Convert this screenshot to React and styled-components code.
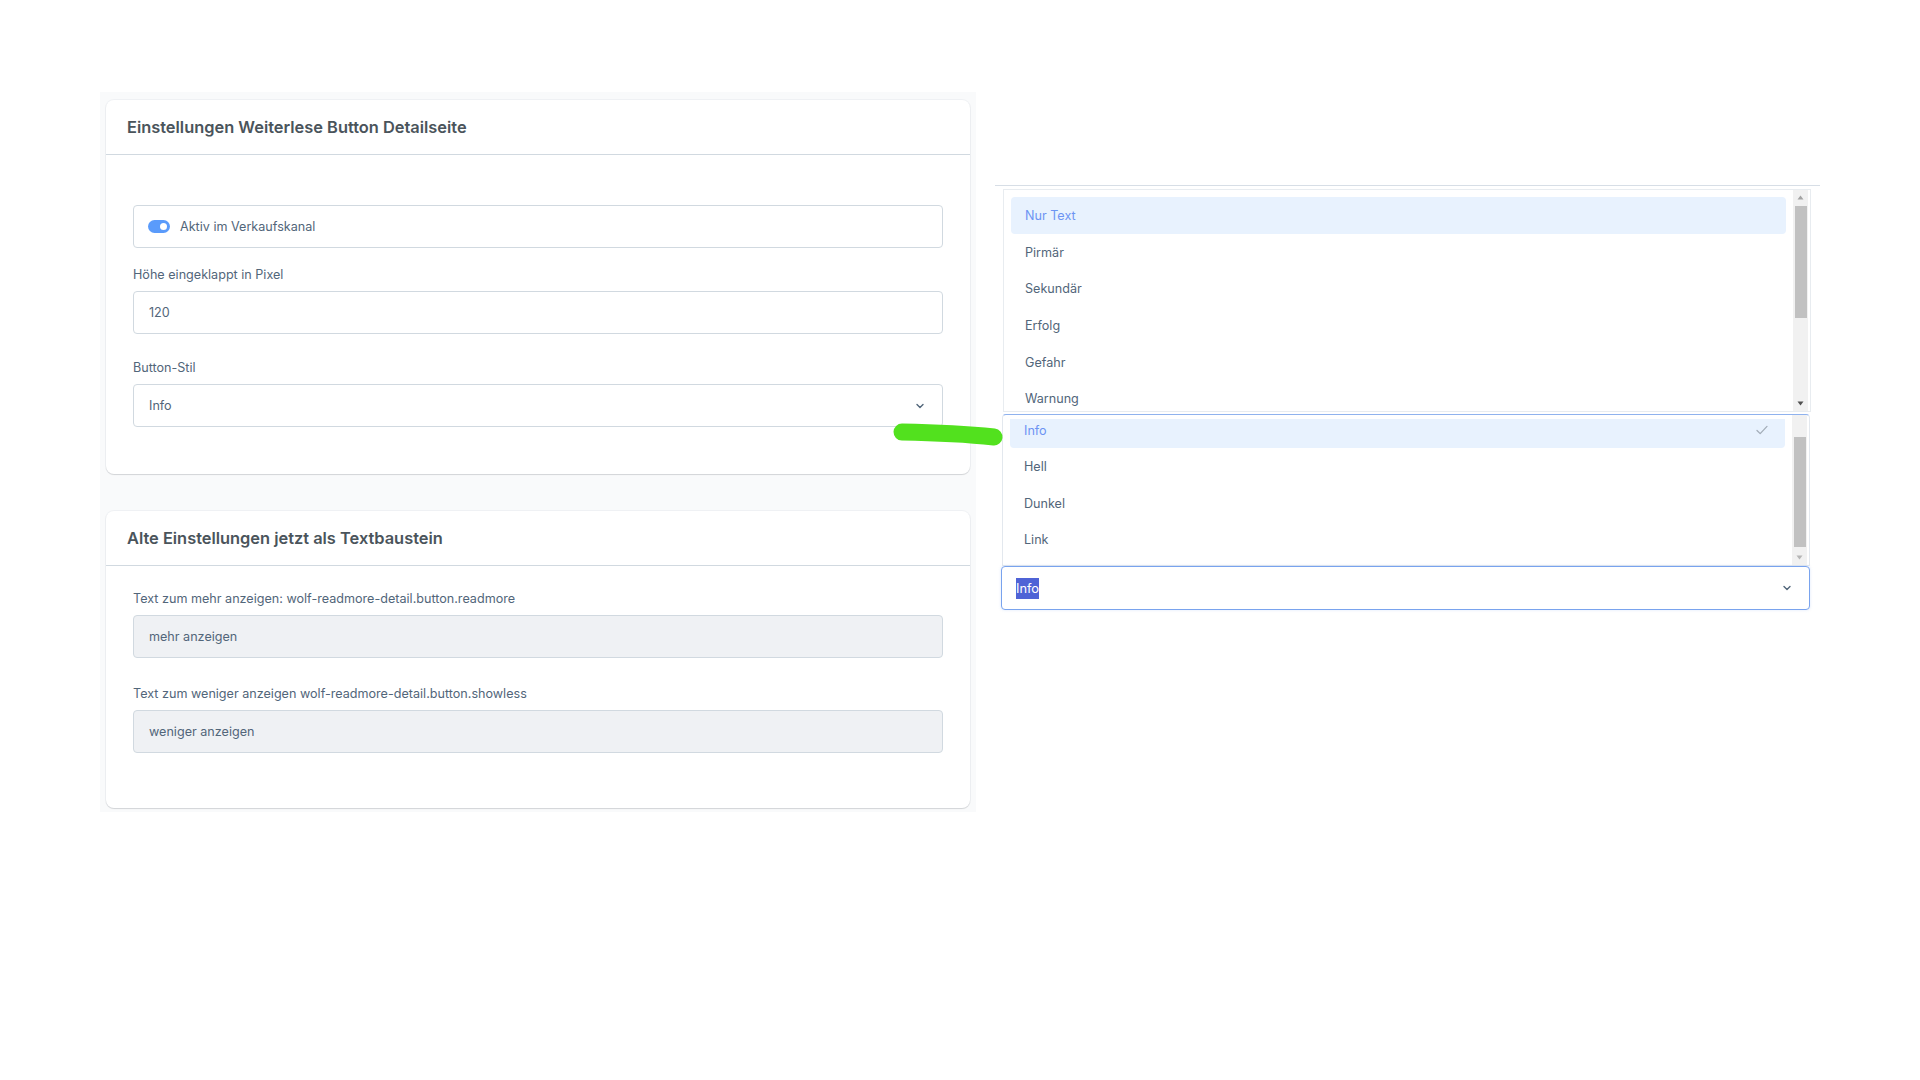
import styled, { createGlobalStyle } from "styled-components";

const GlobalStyle = createGlobalStyle`
  html, body {
    margin: 0;
    padding: 0;
    background: #ffffff;
  }
  body {
    font-family: Inter, "Noto Sans", "Liberation Sans", sans-serif;
    color: #52667a;
    -webkit-font-smoothing: antialiased;
  }
`;

const topOptions = ["Nur Text", "Pirmär", "Sekundär", "Erfolg", "Gefahr", "Warnung"];
const bottomOptions = ["Info", "Hell", "Dunkel", "Link"];

const ChevronDown = ({ size = 10 }) => (
  <svg width={size} height={size} viewBox="0 0 10 10" fill="none">
    <polyline points="2,3.5 5,6.5 8,3.5" stroke="#52667a" strokeWidth="1.4" strokeLinecap="round" strokeLinejoin="round" />
  </svg>
);

const Check = () => (
  <svg width="12" height="10" viewBox="0 0 12 10" fill="none">
    <polyline points="1,5.5 4.2,8.6 11,1.4" stroke="#a3adb8" strokeWidth="1.3" strokeLinecap="round" strokeLinejoin="round" />
  </svg>
);

const ArrowUp = () => (
  <svg width="7" height="5" viewBox="0 0 7 5">
    <polygon points="3.5,0.5 6.5,4.5 0.5,4.5" fill="#a3a3a3" />
  </svg>
);

const ArrowDown = ({ color = "#505050" }) => (
  <svg width="7" height="5" viewBox="0 0 7 5">
    <polygon points="0.5,0.5 6.5,0.5 3.5,4.5" fill={color} />
  </svg>
);

const App = () => {
  return (
    <>
      <GlobalStyle />
      <Page>
        <Content>
          <Card>
            <CardHeader>Einstellungen Weiterlese Button Detailseite</CardHeader>
            <CardBody $top={50} $bottom={47}>
              <SwitchBox>
                <Switch />
                <span>Aktiv im Verkaufskanal</span>
              </SwitchBox>
              <Field $gap={26}>
                <Label>Höhe eingeklappt in Pixel</Label>
                <Input>120</Input>
              </Field>
              <Field>
                <Label>Button-Stil</Label>
                <Input>
                  <span>Info</span>
                  <ChevronDown />
                </Input>
              </Field>
            </CardBody>
          </Card>

          <Card>
            <CardHeader>Alte Einstellungen jetzt als Textbaustein</CardHeader>
            <CardBody $top={25} $bottom={55}>
              <Field $gap={28}>
                <Label>Text zum mehr anzeigen: wolf-readmore-detail.button.readmore</Label>
                <Input $disabled>mehr anzeigen</Input>
              </Field>
              <Field>
                <Label>Text zum weniger anzeigen wolf-readmore-detail.button.showless</Label>
                <Input $disabled>weniger anzeigen</Input>
              </Field>
            </CardBody>
          </Card>
        </Content>

        <Preview>
          <Dropdown>
            <OptionList $padTop={7}>
              {topOptions.map((o, i) => (
                <Option key={o} $active={i === 0}>
                  {o}
                </Option>
              ))}
            </OptionList>
            <Scrollbar>
              <ArrowCell>
                <ArrowUp />
              </ArrowCell>
              <Thumb $top={1} $height={112} />
              <ScrollSpacer />
              <ArrowCell>
                <ArrowDown />
              </ArrowCell>
            </Scrollbar>
          </Dropdown>

          <Dropdown $open>
            <OptionList $padTop={4}>
              {bottomOptions.map((o, i) => (
                <Option key={o} $active={i === 0} $clipped={i === 0}>
                  {o}
                  {i === 0 && <Check />}
                </Option>
              ))}
            </OptionList>
            <Scrollbar>
              <Thumb $top={22} $height={110} />
              <ScrollSpacer />
              <ArrowCell>
                <ArrowDown color="#b5b5b5" />
              </ArrowCell>
            </Scrollbar>
          </Dropdown>

          <FocusedSelect>
            <Selected>Info</Selected>
            <ChevronDown />
          </FocusedSelect>
        </Preview>

        <Marker viewBox="0 0 120 30">
          <path d="M16 14 C 45 14.5, 80 16, 108 19" stroke="#52e11e" strokeWidth="17" strokeLinecap="round" fill="none" />
        </Marker>
      </Page>
    </>
  );
};

export default App;

const Page = styled.div`
  position: relative;
  display: flex;
  align-items: flex-start;
  gap: 19px;
  padding: 92px 0 0 100px;
  min-height: 1080px;
  box-sizing: border-box;
`;

const Content = styled.div`
  width: 876px;
  background: #f9fafb;
  padding: 8px 6px 4px;
  box-sizing: border-box;
  display: flex;
  flex-direction: column;
  gap: 37px;
`;

const Card = styled.div`
  background: #ffffff;
  border-radius: 8px;
  box-shadow: 0 1px 1px rgba(0, 0, 0, 0.12), 0 0 0 1px rgba(210, 216, 224, 0.25);
`;

const CardHeader = styled.div`
  height: 54px;
  display: flex;
  align-items: center;
  padding: 0 21px;
  border-bottom: 1px solid #d1d9e0;
  font-size: 16.4px;
  font-weight: 600;
  color: #4a545b;
`;

const CardBody = styled.div`
  padding: ${(p) => p.$top}px 27px ${(p) => p.$bottom}px;
`;

const SwitchBox = styled.div`
  height: 43px;
  box-sizing: border-box;
  border: 1px solid #d1d9e0;
  border-radius: 4px;
  display: flex;
  align-items: center;
  gap: 10px;
  padding: 0 14px;
  font-size: 12.6px;
  color: #52667a;
  margin-bottom: 19px;
`;

const Switch = styled.span`
  position: relative;
  width: 22px;
  height: 13px;
  border-radius: 7px;
  background: #5a9bfb;
  flex-shrink: 0;

  &::after {
    content: "";
    position: absolute;
    right: 3px;
    top: 3px;
    width: 7px;
    height: 7px;
    border-radius: 50%;
    background: #ffffff;
  }
`;

const Field = styled.div`
  margin-bottom: ${(p) => p.$gap || 0}px;
`;

const Label = styled.div`
  font-size: 12.6px;
  line-height: 16px;
  color: #52667a;
  margin-bottom: 8px;
`;

const Input = styled.div`
  height: 43px;
  box-sizing: border-box;
  border: 1px solid #d1d9e0;
  border-radius: 4px;
  background: ${(p) => (p.$disabled ? "#eff1f4" : "#ffffff")};
  display: flex;
  align-items: center;
  justify-content: space-between;
  padding: 0 17px 0 15px;
  font-size: 12.6px;
  color: #52667a;
`;

const Preview = styled.div`
  width: 825px;
  margin-top: 93px;
  border-top: 1px solid #d7dee6;
  padding: 3px 8px 0 8px;
  box-sizing: border-box;
`;

const Dropdown = styled.div`
  display: flex;
  width: 808px;
  height: ${(p) => (p.$open ? 152 : 223)}px;
  box-sizing: border-box;
  background: #ffffff;
  border: 1px solid ${(p) => (p.$open ? "#e3e8ee" : "#e8ecf0")};
  border-top: 1px solid ${(p) => (p.$open ? "#8fb2ee" : "#e8ecf0")};
  border-radius: ${(p) => (p.$open ? "4px 4px 0 0" : "0")};
  overflow: hidden;
  margin-left: ${(p) => (p.$open ? -1 : 0)}px;
  margin-top: ${(p) => (p.$open ? 2 : 0)}px;
`;

const OptionList = styled.div`
  flex: 1;
  padding: ${(p) => p.$padTop}px 7px 0 7px;
  overflow: hidden;
`;

const Option = styled.div`
  height: ${(p) => (p.$clipped ? 29 : 36.7)}px;
  box-sizing: border-box;
  display: flex;
  align-items: ${(p) => (p.$clipped ? "flex-start" : "center")};
  justify-content: space-between;
  padding: ${(p) => (p.$clipped ? "3px 17px 0 14px" : "0 14px")};
  border-radius: ${(p) => (p.$clipped ? "0 0 4px 4px" : "4px")};
  background: ${(p) => (p.$active ? "#e8f2fe" : "transparent")};
  color: ${(p) => (p.$active ? "#6d94f3" : "#52667a")};
  font-size: 12.6px;
  line-height: 17px;
  flex-shrink: 0;

  svg {
    margin-top: 3px;
  }
`;

const Scrollbar = styled.div`
  width: 15px;
  background: #f1f1f1;
  display: flex;
  flex-direction: column;
  align-items: center;
  margin-right: 2px;
`;

const ArrowCell = styled.div`
  height: 15px;
  width: 15px;
  display: flex;
  align-items: center;
  justify-content: center;
  flex-shrink: 0;
`;

const Thumb = styled.div`
  width: 12px;
  margin-top: ${(p) => p.$top}px;
  height: ${(p) => p.$height}px;
  background: #c1c1c1;
  flex-shrink: 0;
`;

const ScrollSpacer = styled.div`
  flex: 1;
`;

const FocusedSelect = styled.div`
  width: 809px;
  height: 44px;
  box-sizing: border-box;
  margin-left: -2px;
  border: 1px solid #79a3ee;
  border-radius: 4px;
  background: #ffffff;
  display: flex;
  align-items: center;
  justify-content: space-between;
  padding: 0 17px 0 14px;
  font-size: 12.8px;
  color: #52667a;
  box-shadow: 0 0 3px rgba(121, 163, 238, 0.25);
`;

const Selected = styled.span`
  background: #4f63d6;
  color: #ffffff;
  padding: 3px 0;
`;

const Marker = styled.svg`
  position: absolute;
  left: 886px;
  top: 418px;
  width: 120px;
  height: 30px;
  overflow: visible;
`;
